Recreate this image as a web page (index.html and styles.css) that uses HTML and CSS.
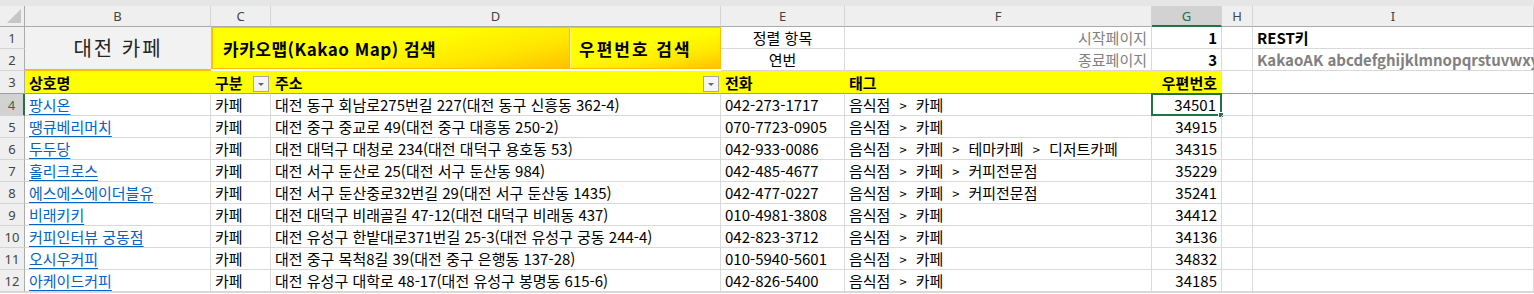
FILE: index.html
```html
<!DOCTYPE html>
<html lang="ko">
<head>
	<meta charset="UTF-8">
	<title>대전 카페</title>
	<link rel="stylesheet" href="styles.css">
</head>
<body>
	<div class="topbar"></div>
	<div class="sheet">
		<!-- 열 머리글 -->
		<div class="ch corner">
			<svg width="14" height="14" viewBox="0 0 14 14"><polygon points="14,0 14,14 0,14" fill="#c6c6c6"/></svg>
		</div>
		<div class="ch">B</div>
		<div class="ch">C</div>
		<div class="ch">D</div>
		<div class="ch">E</div>
		<div class="ch">F</div>
		<div class="ch sel">G</div>
		<div class="ch">H</div>
		<div class="ch">I</div>

		<!-- 1~2행 -->
		<div class="rh">1</div>
		<div class="title">대전 카페</div>
		<div class="btns">
			<div class="btn btn-map">카카오맵(Kakao Map) 검색</div>
			<div class="btn btn-zip">우편번호 검색</div>
		</div>
		<div class="c center">정렬 항목</div>
		<div class="c right gray">시작페이지</div>
		<div class="c right bold">1</div>
		<div class="c"></div>
		<div class="c bold">REST키</div>

		<div class="rh">2</div>
		<div class="c center">연번</div>
		<div class="c right gray">종료페이지</div>
		<div class="c right bold">3</div>
		<div class="c"></div>
		<div class="c bold gray">KakaoAK abcdefghijklmnopqrstuvwxyz</div>

		<!-- 3행 머리글 -->
		<div class="rh frz">3</div>
		<div class="c hd frz">상호명</div>
		<div class="c hd frz">구분<span class="filter"></span></div>
		<div class="c hd frz">주소<span class="filter"></span></div>
		<div class="c hd frz">전화</div>
		<div class="c hd frz">태그</div>
		<div class="c hd frz right">우편번호</div>
		<div class="c frz"></div>
		<div class="c frz"></div>

		<!-- 데이터 -->
		<div class="rh active">4</div>
		<div class="c"><a href="#">팡시온</a></div>
		<div class="c">카페</div>
		<div class="c">대전 동구 회남로275번길 227(대전 동구 신흥동 362-4)</div>
		<div class="c">042-273-1717</div>
		<div class="c">음식점<span class="gt">&gt;</span>카페</div>
		<div class="c right cur">34501<span class="handle"></span></div>
		<div class="c"></div>
		<div class="c"></div>

		<div class="rh">5</div>
		<div class="c"><a href="#">땡큐베리머치</a></div>
		<div class="c">카페</div>
		<div class="c">대전 중구 중교로 49(대전 중구 대흥동 250-2)</div>
		<div class="c">070-7723-0905</div>
		<div class="c">음식점<span class="gt">&gt;</span>카페</div>
		<div class="c right">34915</div>
		<div class="c"></div>
		<div class="c"></div>

		<div class="rh">6</div>
		<div class="c"><a href="#">두두당</a></div>
		<div class="c">카페</div>
		<div class="c">대전 대덕구 대청로 234(대전 대덕구 용호동 53)</div>
		<div class="c">042-933-0086</div>
		<div class="c">음식점<span class="gt">&gt;</span>카페<span class="gt">&gt;</span>테마카페<span class="gt">&gt;</span>디저트카페</div>
		<div class="c right">34315</div>
		<div class="c"></div>
		<div class="c"></div>

		<div class="rh">7</div>
		<div class="c"><a href="#">홀리크로스</a></div>
		<div class="c">카페</div>
		<div class="c">대전 서구 둔산로 25(대전 서구 둔산동 984)</div>
		<div class="c">042-485-4677</div>
		<div class="c">음식점<span class="gt">&gt;</span>카페<span class="gt">&gt;</span>커피전문점</div>
		<div class="c right">35229</div>
		<div class="c"></div>
		<div class="c"></div>

		<div class="rh">8</div>
		<div class="c"><a href="#">에스에스에이더블유</a></div>
		<div class="c">카페</div>
		<div class="c">대전 서구 둔산중로32번길 29(대전 서구 둔산동 1435)</div>
		<div class="c">042-477-0227</div>
		<div class="c">음식점<span class="gt">&gt;</span>카페<span class="gt">&gt;</span>커피전문점</div>
		<div class="c right">35241</div>
		<div class="c"></div>
		<div class="c"></div>

		<div class="rh">9</div>
		<div class="c"><a href="#">비래키키</a></div>
		<div class="c">카페</div>
		<div class="c">대전 대덕구 비래골길 47-12(대전 대덕구 비래동 437)</div>
		<div class="c">010-4981-3808</div>
		<div class="c">음식점<span class="gt">&gt;</span>카페</div>
		<div class="c right">34412</div>
		<div class="c"></div>
		<div class="c"></div>

		<div class="rh">10</div>
		<div class="c"><a href="#">커피인터뷰 궁동점</a></div>
		<div class="c">카페</div>
		<div class="c">대전 유성구 한밭대로371번길 25-3(대전 유성구 궁동 244-4)</div>
		<div class="c">042-823-3712</div>
		<div class="c">음식점<span class="gt">&gt;</span>카페</div>
		<div class="c right">34136</div>
		<div class="c"></div>
		<div class="c"></div>

		<div class="rh">11</div>
		<div class="c"><a href="#">오시우커피</a></div>
		<div class="c">카페</div>
		<div class="c">대전 중구 목척8길 39(대전 중구 은행동 137-28)</div>
		<div class="c">010-5940-5601</div>
		<div class="c">음식점<span class="gt">&gt;</span>카페</div>
		<div class="c right">34832</div>
		<div class="c"></div>
		<div class="c"></div>

		<div class="rh">12</div>
		<div class="c"><a href="#">아케이드커피</a></div>
		<div class="c">카페</div>
		<div class="c">대전 유성구 대학로 48-17(대전 유성구 봉명동 615-6)</div>
		<div class="c">042-826-5400</div>
		<div class="c">음식점<span class="gt">&gt;</span>카페</div>
		<div class="c right">34185</div>
		<div class="c"></div>
		<div class="c"></div>
	</div>
</body>
</html>
```

FILE: styles.css
```css
*{box-sizing:border-box;}
body{margin:0;background:#fff;font:15px/1 "Noto Sans CJK KR","Noto Sans",sans-serif;color:#000;overflow:hidden;}

.topbar{height:6px;background:#e6e6e6;}

.sheet{display:grid;grid-template-columns:25px 186px 60px 450px 124px 307px 70px 31px 281px;grid-template-rows:21px 22px 22px 23px repeat(9,22px);border-bottom:1px solid #d9d9d9;}

/* 머리글 */
.ch{display:flex;align-items:center;justify-content:center;background:#efefef;border-right:1px solid #d4d4d4;border-bottom:1px solid #ababab;font:13px "Noto Sans",sans-serif;color:#444;}
.ch.corner{justify-content:flex-end;align-items:flex-end;padding:0 3px 3px 0;border-right-color:#ababab;}
.ch.sel{background:#d2d2d2;color:#217346;border-bottom:2px solid #217346;}
.rh{grid-column:1;display:flex;align-items:center;justify-content:center;background:#efefef;border-right:1px solid #ababab;border-bottom:1px solid #d4d4d4;font:13px "Noto Sans",sans-serif;color:#444;}
.rh.active{background:#d2d2d2;color:#217346;border-right:2px solid #217346;}

/* 셀 */
.c{position:relative;display:flex;align-items:center;padding:0 4px;white-space:nowrap;border-right:1px solid #d9d9d9;border-bottom:1px solid #d9d9d9;}
.c.center{justify-content:center;}
.c.right{justify-content:flex-end;}
.c.bold{font-weight:bold;}
.c.gray{color:#808080;}
.c a{color:#0563c1;text-decoration:underline;text-underline-offset:3px;}
.gt{margin:2px 9px 0;font-size:13px;}

.title{grid-column:2;grid-row:2 / 4;display:flex;align-items:center;justify-content:center;background:#f2f2f2;border-bottom:2px solid #ffc000;font-size:20px;color:#262626;letter-spacing:2px;}

.btns{grid-column:3 / 5;grid-row:2 / 4;display:flex;padding-bottom:2px;background:#fff;}
.btn{display:flex;align-items:center;height:100%;font-size:17px;font-weight:bold;letter-spacing:.5px;border:1px solid #ffc000;background:linear-gradient(168deg,#ffff00 0%,#ffff00 45%,#ffe600 75%,#ffc000 100%);}
.btn-map{width:359px;padding-left:10px;border-left-width:2px;}
.btn-zip{flex:1;padding-left:8px;letter-spacing:2px;border-left-color:#fff58a;}

/* 3행 */
.c.hd{background:#ffff00;font-weight:bold;border-right-color:#ffff00;}
.frz{border-bottom:1px solid #9e9e9e;}
.rh.frz{border-bottom-color:#9e9e9e;}
.filter{position:absolute;right:1px;bottom:1px;width:16px;height:16px;background:#f5f5f5;border:1px solid #a6a6a6;}
.filter::after{content:"";position:absolute;left:4px;top:6px;border-left:3px solid transparent;border-right:3px solid transparent;border-top:3px solid #666;}

/* 선택 셀 */
.c.cur{border:2px solid #217346;margin:-1px 0 0 -1px;}
.handle{position:absolute;right:-4px;bottom:-4px;width:6px;height:6px;background:#217346;border:1px solid #fff;}
```
